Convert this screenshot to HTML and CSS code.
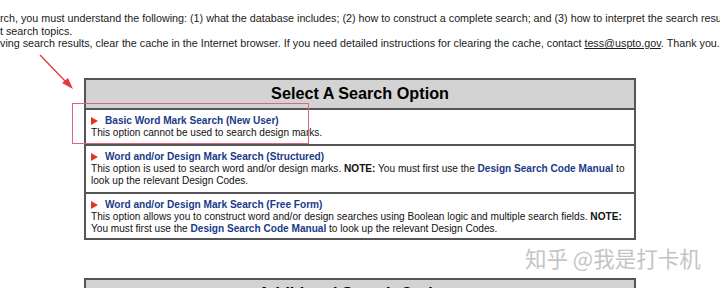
FILE: index.html
```html
<!DOCTYPE html>
<html>
<head>
<meta charset="utf-8">
<link rel="stylesheet" href="styles.css">
</head>
<body>
<div class="page">
  <div class="intro">
    <div class="line">rch, you must understand the following: (1) what the database includes; (2) how to construct a complete search; and (3) how to interpret the search results. For more information</div>
    <div class="line">t search topics.</div>
    <div class="line">ving search results, clear the cache in the Internet browser. If you need detailed instructions for clearing the cache, contact <a class="mail" href="#">tess@uspto.gov</a>. Thank you.</div>
  </div>

  <table class="opts">
    <tr><th class="head">Select A Search Option</th></tr>
    <tr><td class="cell">
      <div class="title"><span class="tri"></span><a href="#" class="link">Basic Word Mark Search (New User)</a></div>
      <div class="desc">This option cannot be used to search design marks.</div>
    </td></tr>
    <tr><td class="cell">
      <div class="title"><span class="tri"></span><a href="#" class="link">Word and/or Design Mark Search (Structured)</a></div>
      <div class="desc">This option is used to search word and/or design marks. <b>NOTE:</b> You must first use the <a href="#" class="link">Design Search Code Manual</a> to look up the relevant Design Codes.</div>
    </td></tr>
    <tr><td class="cell last">
      <div class="title"><span class="tri"></span><a href="#" class="link">Word and/or Design Mark Search (Free Form)</a></div>
      <div class="desc">This option allows you to construct word and/or design searches using Boolean logic and multiple search fields. <b>NOTE:</b> You must first use the <a href="#" class="link">Design Search Code Manual</a> to look up the relevant Design Codes.</div>
    </td></tr>
  </table>

  <table class="opts second">
    <tr><th class="head">Additional Search Options</th></tr>
  </table>
</div>

<svg class="arrow" width="50" height="50" viewBox="0 0 50 50">
  <line x1="2" y1="2" x2="29" y2="30" stroke="#e0393e" stroke-width="1.3"/>
  <polygon points="35,36 24,30 30,25" fill="#e0393e"/>
</svg>
<div class="highlight"></div>
<div class="watermark">知乎 @我是打卡机</div>
</body>
</html>
```
FILE: styles.css
```css
html, body {
  margin: 0;
  padding: 0;
  background: #fff;
  overflow: hidden;
}
body {
  width: 720px;
  height: 288px;
  position: relative;
  font-family: "Liberation Sans", Arial, sans-serif;
  color: #111;
}
.page {
  padding-top: 12px;
}
.intro {
  font-size: 10.75px;
  line-height: 12.5px;
  color: #1a1a1a;
}
.line {
  white-space: nowrap;
}
.mail {
  color: #1a1a1a;
  text-decoration: underline;
}
.opts {
  margin-top: 28px;
  margin-left: 84px;
  width: 552px;
  border: 2px solid #555;
  border-collapse: collapse;
}
.head {
  background: #d3d3d3;
  height: 28px;
  padding: 0;
  font-size: 16.2px;
  font-weight: bold;
  color: #000;
  text-align: center;
  border-bottom: 2px solid #555;
}
.cell {
  padding: 5px 4px 5px 5px;
  border-bottom: 2px solid #555;
  font-size: 10.1px;
  line-height: 12px;
}
.cell.last {
  padding-bottom: 3px;
}
.title {
  display: flex;
  align-items: center;
  gap: 7px;
}
.tri {
  width: 0;
  height: 0;
  border-top: 4px solid transparent;
  border-bottom: 4px solid transparent;
  border-left: 7px solid #e8331c;
}
.link {
  color: #1b3a8a;
  font-weight: bold;
  text-decoration: none;
}
.desc {
  color: #111;
}
.second {
  margin-top: 38px;
}
.arrow {
  position: absolute;
  left: 38px;
  top: 53px;
}
.highlight {
  position: absolute;
  left: 72px;
  top: 103px;
  width: 235px;
  height: 39px;
  border: 1px solid #d9687c;
}
.watermark {
  position: absolute;
  left: 525px;
  top: 244px;
  font-family: "Noto Sans CJK SC", sans-serif;
  font-size: 21.5px;
  line-height: 28px;
  color: #c4c4c4;
  text-shadow: 0 0 1px #fff;
  white-space: nowrap;
}
```
